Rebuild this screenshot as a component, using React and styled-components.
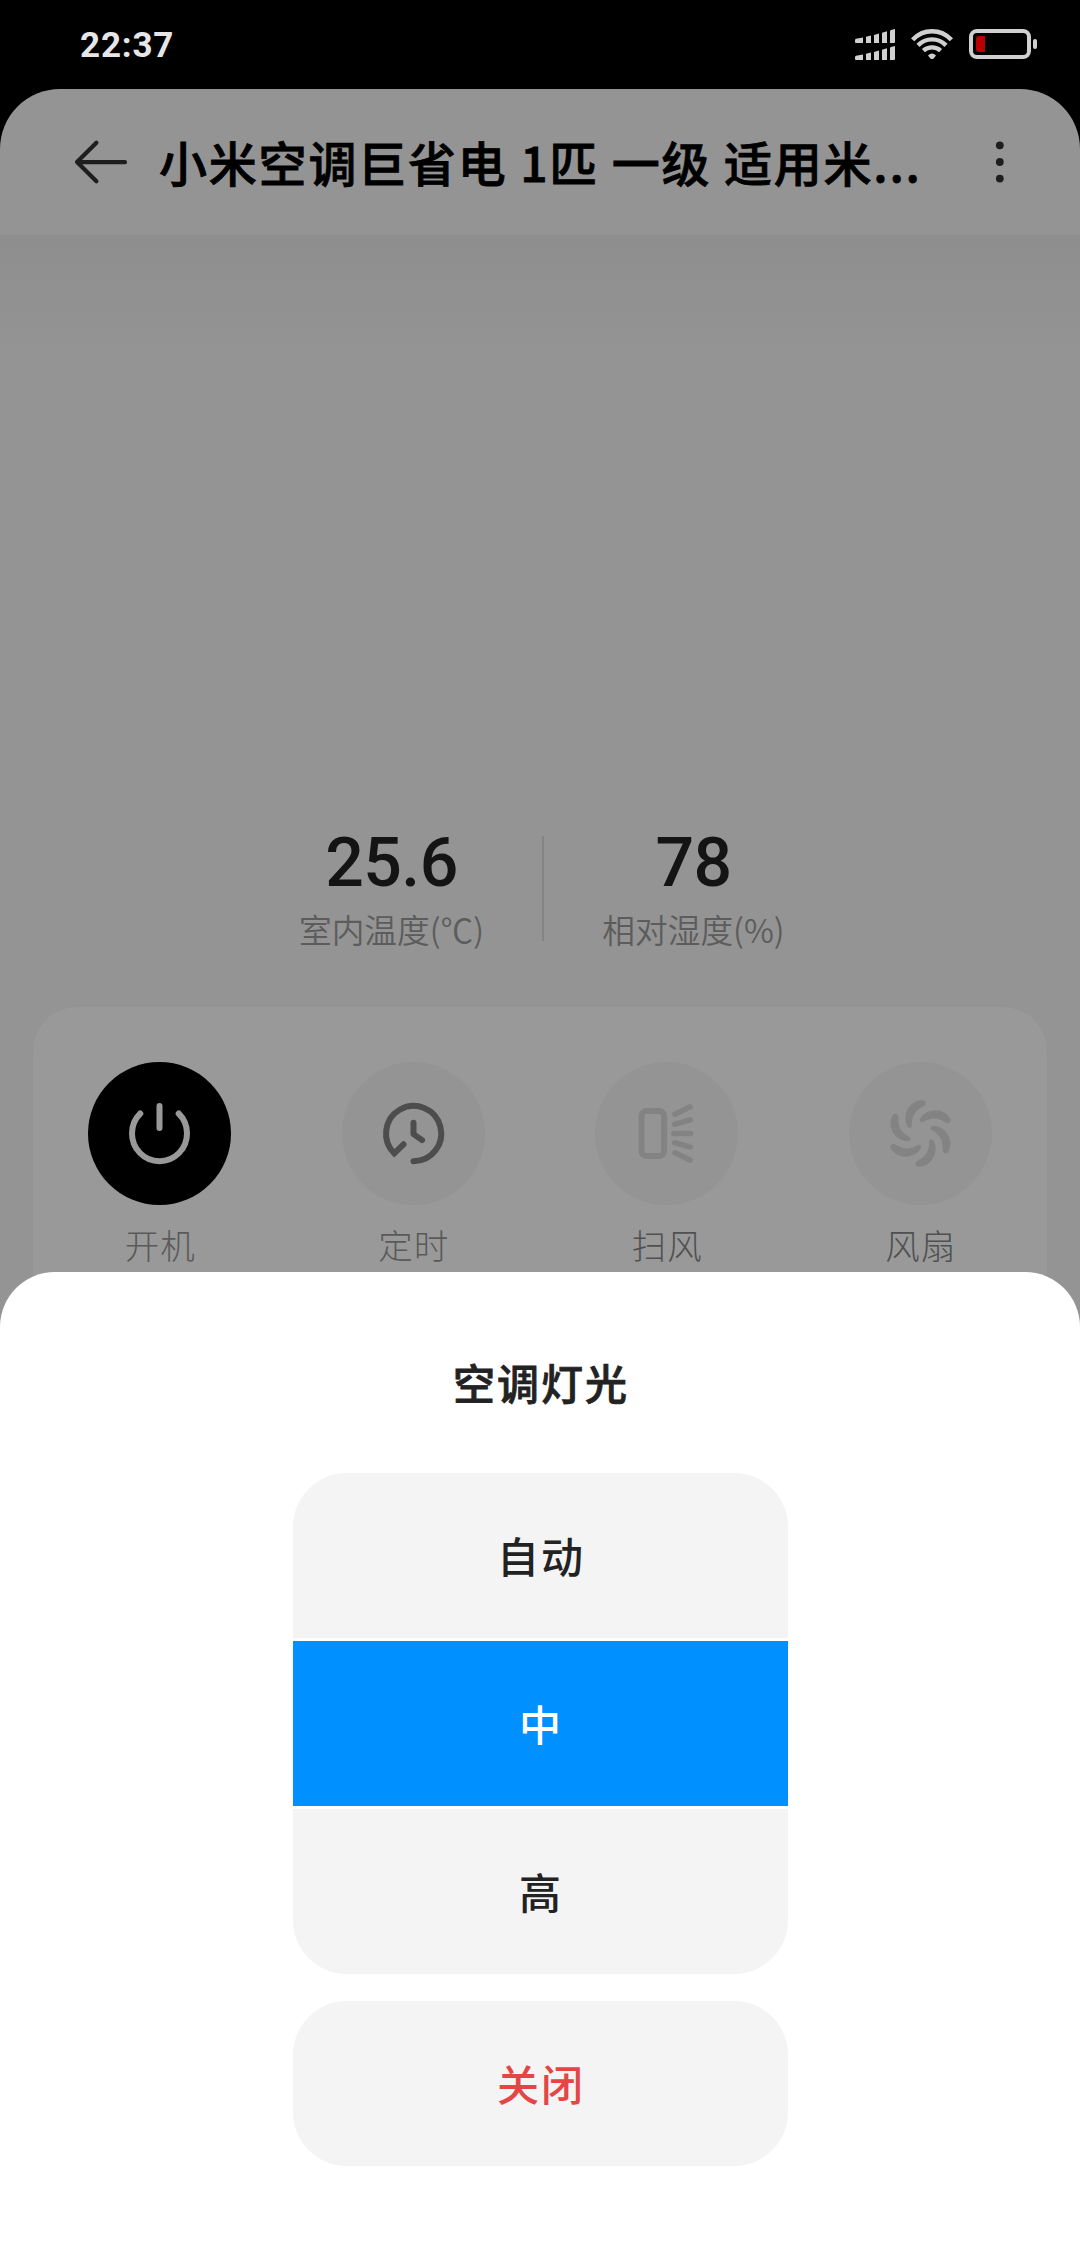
import React from "react";
import styled, { createGlobalStyle } from "styled-components";

const GlobalStyle = createGlobalStyle`
  *, *::before, *::after { box-sizing: border-box; }
  body { margin: 0; background: #000; }
  svg { display: block; }
  button { font: inherit; color: inherit; border: 0; padding: 0; margin: 0; background: none; }
`;

const Phone = styled.div`
  position: relative;
  display: flex;
  flex-direction: column;
  width: 1080px;
  height: 2248px;
  overflow: hidden;
  background: #000;
  font-family: "Noto Sans CJK SC", sans-serif;
`;

const StatusBar = styled.div`
  flex: none;
  display: flex;
  justify-content: space-between;
  height: 89px;
  padding: 0 42px 0 80px;
`;

const Clock = styled.time`
  height: 89px;
  font: 700 35px/91px Roboto, sans-serif;
  letter-spacing: 0.8px;
  color: #e6e6e6;
`;

const Device = styled.main`
  flex: 1;
  display: flex;
  flex-direction: column;
  border-radius: 60px 60px 0 0;
  overflow: hidden;
  background: #949494;
`;

const Header = styled.header`
  flex: none;
  display: flex;
  align-items: center;
  height: 146px;
  padding: 0 60px 0 72px;
`;

const IconButton = styled.button`
  flex: none;
  display: flex;
`;

const Title = styled.h1`
  flex: 1;
  margin: 0 0 0 29px;
  padding-bottom: 3px;
  font-size: 48px;
  font-weight: 500;
  line-height: 72px;
  letter-spacing: 1.8px;
  white-space: nowrap;
  color: #000;
  -webkit-text-stroke: 0.8px #000;
`;

const Stage = styled.section`
  flex: none;
  display: flex;
  justify-content: center;
  align-items: flex-end;
  height: 772px;
  padding: 0 0 54px 5px;
  background: linear-gradient(#8d8e8d, #949494 130px);
`;

const Metric = styled.div`
  display: flex;
  flex-direction: column;
  align-items: center;
  width: 300px;
`;

const MetricValue = styled.div`
  font: 500 68px/80px Roboto, sans-serif;
  letter-spacing: -0.6px;
  color: #141414;
`;

const MetricLabel = styled.div`
  margin-top: 2px;
  font-size: 32.7px;
  font-weight: 350;
  line-height: 48px;
  color: #5c5c5c;
`;

const Divider = styled.div`
  width: 2px;
  height: 105px;
  margin-bottom: 12px;
  background: #848484;
`;

const Controls = styled.section`
  flex: 1;
  display: grid;
  grid-template-columns: repeat(4, 1fr);
  align-items: start;
  margin: 0 33px;
  padding-top: 55px;
  border-radius: 44px 44px 0 0;
  background: #999;
`;

const Control = styled.div`
  display: flex;
  flex-direction: column;
  align-items: center;
  gap: 13px;
`;

const Disc = styled.div`
  display: flex;
  width: 143px;
  height: 143px;
  border-radius: 50%;
  color: ${(p) => p.$ink};
  background: ${(p) => (p.$on ? "#000" : "#949494")};
`;

const ControlLabel = styled.div`
  font-size: 34.5px;
  font-weight: 300;
  line-height: 52px;
  letter-spacing: 1px;
  text-indent: 1px;
  color: ${(p) => p.$ink};
`;

const Sheet = styled.section`
  position: absolute;
  left: 0;
  right: 0;
  bottom: 0;
  display: flex;
  flex-direction: column;
  align-items: center;
  height: 976px;
  border-radius: 55px 55px 0 0;
  background: #fff;
`;

const SheetTitle = styled.h2`
  margin: 79px 0 60px;
  font-size: 42px;
  font-weight: 500;
  line-height: 62px;
  letter-spacing: 2px;
  text-indent: 2px;
  color: #222;
  -webkit-text-stroke: 0.8px #222;
`;

const Options = styled.div`
  display: flex;
  flex-direction: column;
  gap: 3px;
  width: 495px;
  border-radius: 54px;
  overflow: hidden;
`;

const Option = styled.button`
  height: 165px;
  padding-bottom: 2px;
  font-size: 42px;
  font-weight: 500;
  line-height: 62px;
  letter-spacing: 2px;
  text-indent: 2px;
  color: ${(p) => (p.$selected ? "#fff" : "#222")};
  background: ${(p) => (p.$selected ? "#0090ff" : "#f4f4f4")};
`;

const CloseOption = styled(Option)`
  width: 495px;
  margin-top: 27px;
  border-radius: 54px;
  color: #e54545;
`;

const StatusIcons = () => (
  <svg width="184" height="89" viewBox="855 0 184 89" fill="#d0d0d0">
    {[0, 17].map((dy) => (
      <g key={dy} transform={`translate(0 ${dy})`}>
        <path d="M856 40.2Q856 39 857 38.8L864 37.6V43H857Q856 43 856 42Z" />
        <path d="M867 36.8L872 35.4V43H867Z" />
        <path d="M875 34.9L880 33.5V43H875Z" />
        <path d="M883 32.7L888 31.3V43H883Z" />
        <path d="M891 31.2Q891 30.3 892 30L896 29V42Q896 43 895 43H891Z" />
      </g>
    ))}
    <g fill="none" stroke="#d0d0d0" strokeWidth="4.4">
      <path d="M913.6 39.8Q921.5 31.2 933 31.2T952.4 39.8" />
      <path d="M919 45.4Q924.8 39.4 933 39.4T947 45.4" />
      <path d="M924.4 50.6Q928 47.4 933 47.4T941.6 50.6" />
    </g>
    <path d="M929 55.4Q933 51.4 937 55.4L934.6 58.4Q933 59.8 931.4 58.4Z" />
    <rect x="972" y="31" width="58" height="26" rx="6" fill="none" stroke="#d0d0d0" strokeWidth="4" />
    <path d="M980 36H986V52H980Q977 52 977 49V39Q977 36 980 36Z" fill="#b80000" />
    <rect x="1034" y="39" width="4" height="10" rx="2" />
  </svg>
);

const BackIcon = () => (
  <svg width="58" height="50" viewBox="72 137 58 50" fill="none" stroke="#1e1e1e" strokeWidth="4.2" strokeLinecap="round" strokeLinejoin="round">
    <path d="M125 162.2L77 162L96.4 142.8M77 162L96.4 181.2" />
  </svg>
);

const MoreIcon = () => (
  <svg width="40" height="50" viewBox="980 137 40 50" fill="#1e1e1e">
    <circle cx="999.8" cy="145.3" r="3.9" />
    <circle cx="999.8" cy="162" r="3.9" />
    <circle cx="999.8" cy="178.6" r="3.9" />
  </svg>
);

const Glyph = ({ children }) => (
  <svg width="143" height="143" viewBox="-71.5 -71.5 143 143" fill="none" stroke="currentColor" strokeWidth="6" strokeLinecap="round">
    {children}
  </svg>
);

const PowerGlyph = () => (
  <Glyph>
    <path d="M-19.2 -20A27.5 27.8 0 1 0 19.2 -20M0 -27.6V-5.6" />
  </Glyph>
);

const TimerGlyph = () => (
  <Glyph>
    <path d="M0 27.7A27.6 27.6 0 1 0 -19.2 19.8L-10 10.8" />
    <path d="M0 -10.8V0.6L8.6 6.6" strokeLinejoin="round" />
  </Glyph>
);

const SwingGlyph = () => (
  <Glyph>
    <rect x="-25" y="-22.4" width="22.6" height="44.8" rx="5" />
    <path strokeWidth="5.4" d="M8.4 -19.2L23.6 -26.6M8 -9.2L23.8 -13.6M7.4 0H24.2M8 9.2L23.8 13.6M8.4 19.2L23.6 26.6" />
  </Glyph>
);

const BLADE = "M2 -33.2C-8 -33.5 -16 -24 -15 -13C-14.8 -10.5 -13.6 -8.2 -12.8 -6.8C-11.8 -5.2 -8.9 -5.4 -8.7 -8C-8.6 -17.5 -6 -22.6 3 -27.2C6.5 -29.2 5 -33.1 2 -33.2Z";

const FanGlyph = () => (
  <Glyph>
    {[0, 60, 120, 180, 240, 300].map((angle) => (
      <path key={angle} d={BLADE} transform={`rotate(${angle})`} fill="currentColor" stroke="none" />
    ))}
  </Glyph>
);

const controls = [
  { label: "开机", Icon: PowerGlyph, on: true, ink: "#999", labelInk: "#5a5a5a" },
  { label: "定时", Icon: TimerGlyph, ink: "#4d4d4d", labelInk: "#5a5a5a" },
  { label: "扫风", Icon: SwingGlyph, ink: "#838383", labelInk: "#505050" },
  { label: "风扇", Icon: FanGlyph, ink: "#838383", labelInk: "#505050" },
];

const options = ["自动", "中", "高"];

export default function App() {
  const [selected, setSelected] = React.useState("中");
  return (
    <>
      <GlobalStyle />
      <Phone>
        <StatusBar>
          <Clock>22:37</Clock>
          <StatusIcons />
        </StatusBar>
        <Device>
          <Header>
            <IconButton aria-label="返回"><BackIcon /></IconButton>
            <Title>小米空调巨省电 1匹 一级 适用米...</Title>
            <IconButton aria-label="更多"><MoreIcon /></IconButton>
          </Header>
          <Stage>
            <Metric>
              <MetricValue>25.6</MetricValue>
              <MetricLabel>室内温度(℃)</MetricLabel>
            </Metric>
            <Divider />
            <Metric>
              <MetricValue>78</MetricValue>
              <MetricLabel>相对湿度(%)</MetricLabel>
            </Metric>
          </Stage>
          <Controls>
            {controls.map(({ label, Icon, on, ink, labelInk }) => (
              <Control key={label}>
                <Disc $on={on} $ink={ink}><Icon /></Disc>
                <ControlLabel $ink={labelInk}>{label}</ControlLabel>
              </Control>
            ))}
          </Controls>
        </Device>
        <Sheet>
          <SheetTitle>空调灯光</SheetTitle>
          <Options>
            {options.map((name) => (
              <Option key={name} $selected={name === selected} onClick={() => setSelected(name)}>
                {name}
              </Option>
            ))}
          </Options>
          <CloseOption>关闭</CloseOption>
        </Sheet>
      </Phone>
    </>
  );
}
